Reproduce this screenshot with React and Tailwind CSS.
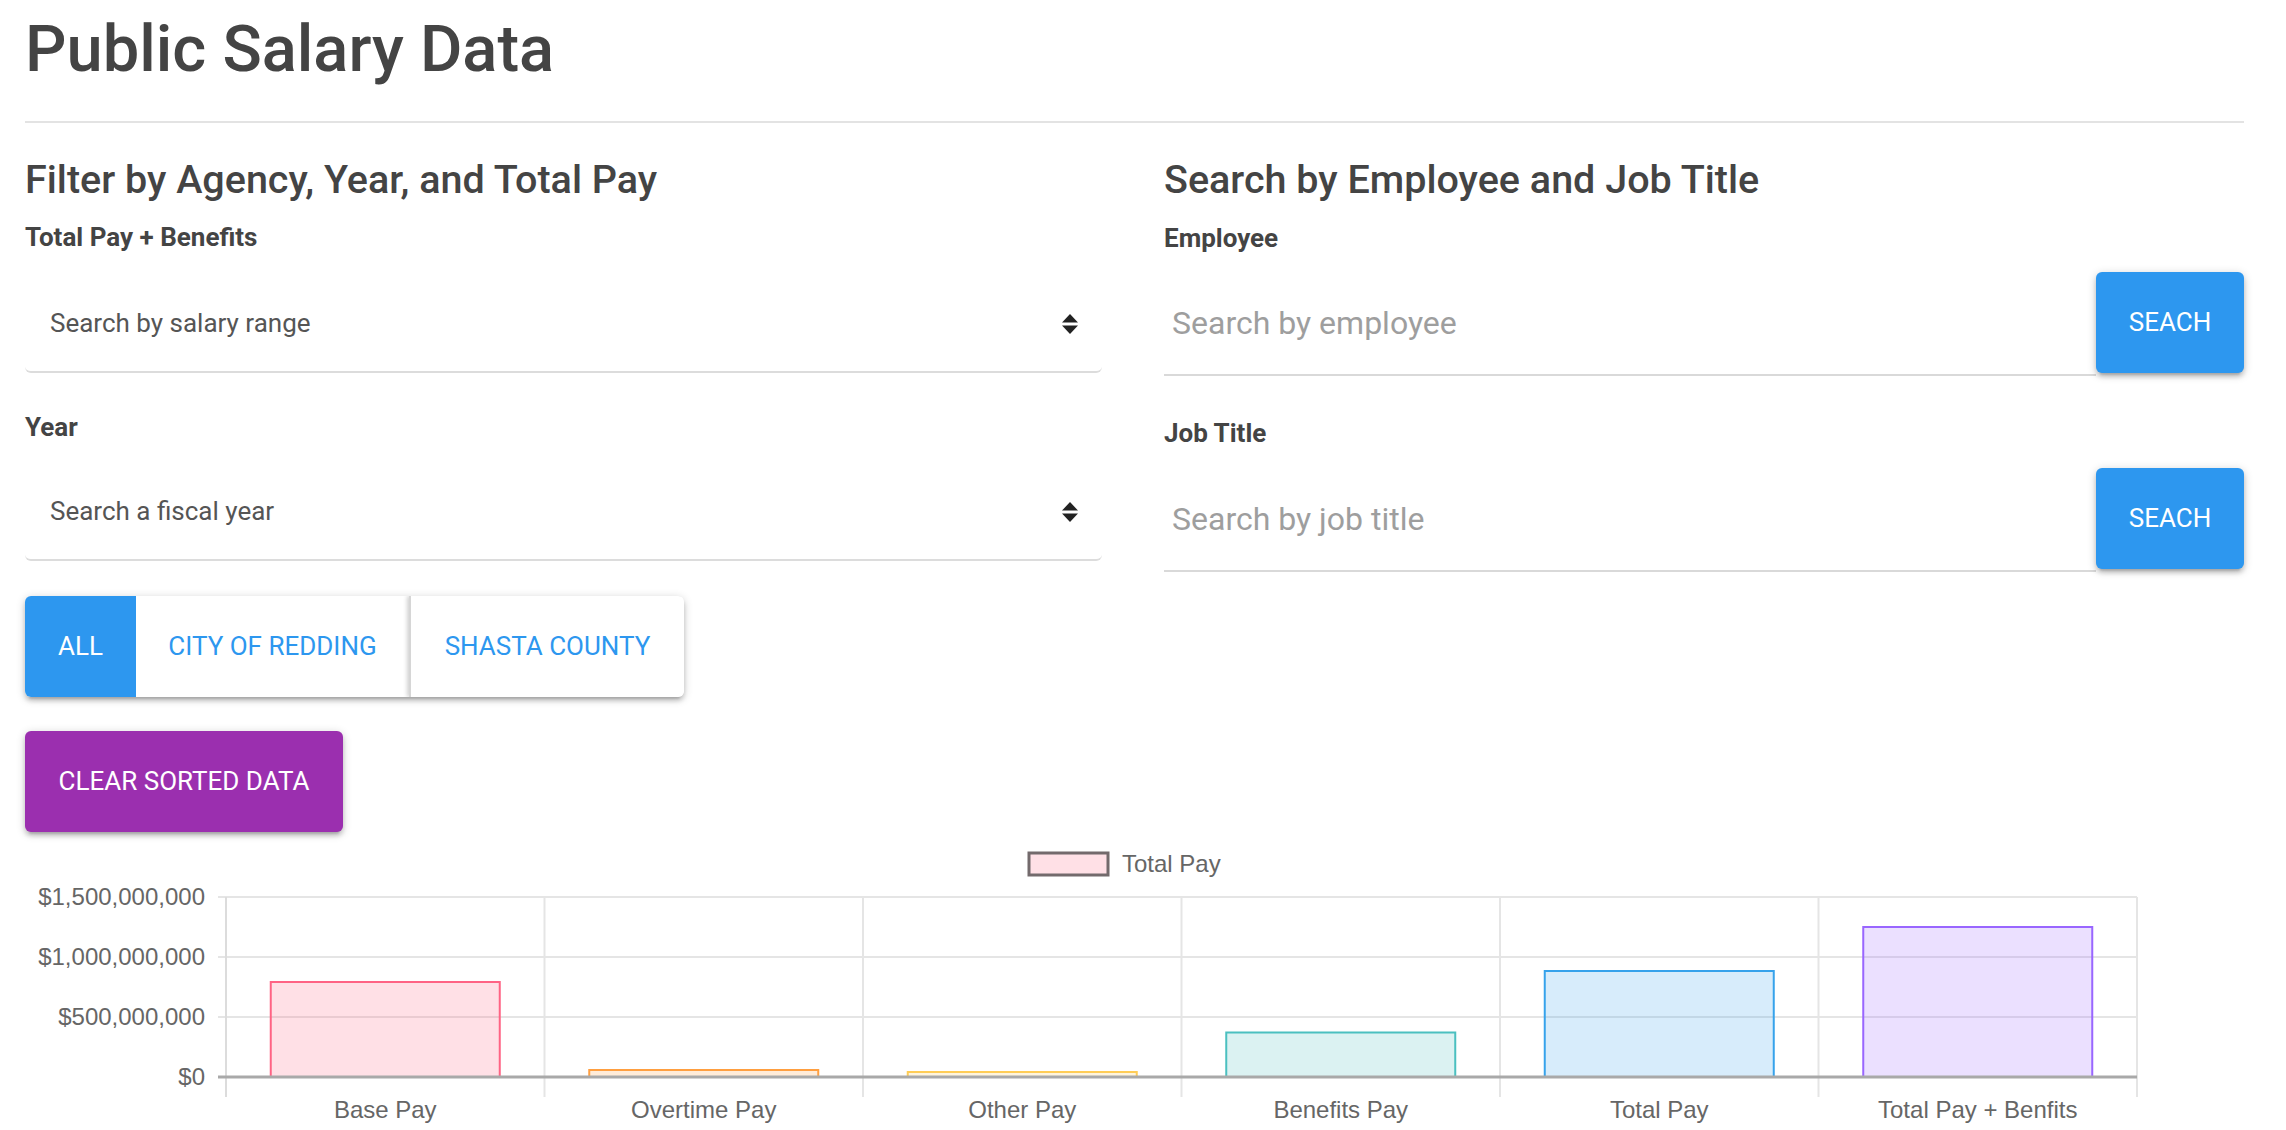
import React from "react";

function Arrows() {
  return (
    <svg width="16" height="20" viewBox="0 0 16 20">
      <path d="M8 0 L16 8.5 L0 8.5 Z" fill="#222" />
      <path d="M0 11.5 L16 11.5 L8 20 Z" fill="#222" />
    </svg>
  );
}

function SelectBox({ text, className }) {
  return (
    <div
      className={
        "h-[97px] rounded-[6px] border-b-2 border-[#dcdcdc] bg-white flex items-center justify-between pl-[25px] pr-[24px] " +
        className
      }
    >
      <span className="text-[26px] text-[#555]">{text}</span>
      <Arrows />
    </div>
  );
}

function SearchRow({ placeholder, className }) {
  return (
    <div className={"flex items-start " + className}>
      <div className="flex-1 h-[104px] border-b-2 border-[#d9d9d9] flex items-center pl-[8px]">
        <span className="text-[32px] text-[#9e9e9e]">{placeholder}</span>
      </div>
      <button className="w-[148px] h-[101px] rounded-[6px] bg-[#2d97ef] text-white text-[26px] shadow-[0_4px_4px_0_rgba(0,0,0,0.14),0_6px_2px_-4px_rgba(0,0,0,0.12),0_2px_10px_0_rgba(0,0,0,0.2)]">
        SEACH
      </button>
    </div>
  );
}

const bars = [
  { label: "Base Pay", h: 95, fill: "rgba(255,99,132,0.2)", stroke: "rgb(255,99,132)" },
  { label: "Overtime Pay", h: 7, fill: "rgba(255,159,64,0.2)", stroke: "rgb(255,159,64)" },
  { label: "Other Pay", h: 5, fill: "rgba(255,205,86,0.2)", stroke: "rgb(255,205,86)" },
  { label: "Benefits Pay", h: 44.5, fill: "rgba(75,192,192,0.2)", stroke: "rgb(75,192,192)" },
  { label: "Total Pay", h: 106, fill: "rgba(54,162,235,0.2)", stroke: "rgb(54,162,235)" },
  { label: "Total Pay + Benfits", h: 150, fill: "rgba(153,102,255,0.2)", stroke: "rgb(153,102,255)" },
];

function Chart() {
  const x0 = 201;
  const cw = 318.5;
  const zero = 237;
  const grid = [
    { y: 57, t: "$1,500,000,000" },
    { y: 117, t: "$1,000,000,000" },
    { y: 177, t: "$500,000,000" },
    { y: 237, t: "$0" },
  ];
  const bw = 229;
  return (
    <svg width="2219" height="290" viewBox="0 0 2219 290" className="block overflow-visible" style={{ fontFamily: "'Liberation Sans', Arial, sans-serif" }}>
      <rect x="1004" y="13" width="79" height="22" fill="rgba(255,99,132,0.2)" stroke="#736a6c" strokeWidth="3" />
      <text x="1097" y="32" fontSize="24" fill="#666">Total Pay</text>
      {grid.slice(0, 3).map((g) => (
        <line key={g.y} x1="193" x2={x0 + cw * 6} y1={g.y} y2={g.y} stroke="#e5e5e5" strokeWidth="2" />
      ))}
      {[0, 1, 2, 3, 4, 5, 6].map((i) => (
        <line key={i} x1={x0 + cw * i} x2={x0 + cw * i} y1="57" y2="257" stroke={i === 0 ? "#dcdcdc" : "#e5e5e5"} strokeWidth="2" />
      ))}
      {bars.map((b, i) => {
        const cx = x0 + cw * (i + 0.5);
        const left = cx - bw / 2;
        const top = zero - b.h;
        return (
          <g key={b.label}>
            <rect x={left} y={top} width={bw} height={b.h} fill={b.fill} />
            <path d={`M${left} ${zero} L${left} ${top} L${left + bw} ${top} L${left + bw} ${zero}`} fill="none" stroke={b.stroke} strokeWidth="2" />
            <text x={cx} y="278" fontSize="24" fill="#666" textAnchor="middle">{b.label}</text>
          </g>
        );
      })}
      <line x1="193" x2={x0 + cw * 6} y1={zero} y2={zero} stroke="#a9a9a9" strokeWidth="3" />
      {grid.map((g) => (
        <text key={g.t} x="180" y={g.y + 8} fontSize="24" fill="#666" textAnchor="end">{g.t}</text>
      ))}
    </svg>
  );
}

export default function App() {
  const shadow = "shadow-[0_4px_4px_0_rgba(0,0,0,0.14),0_6px_2px_-4px_rgba(0,0,0,0.12),0_2px_10px_0_rgba(0,0,0,0.2)]";
  return (
    <div className="min-h-screen bg-white pl-[25px] pr-[42px] text-[#444] font-['Roboto',sans-serif]">
      <h1 className="h-[121px] pt-[13px] text-[65px] leading-[72px] font-medium">Public Salary Data</h1>
      <div className="h-[2px] bg-[#e3e3e3]" />
      <div className="grid grid-cols-[1077px_1fr] gap-x-[62px]">
        <div className="flex flex-col">
          <h2 className="mt-[35px] text-[39.5px] leading-[44px] font-medium">Filter by Agency, Year, and Total Pay</h2>
          <div className="mt-[20px] text-[26px] leading-[30px] font-bold">Total Pay + Benefits</div>
          <SelectBox text="Search by salary range" className="mt-[24px]" />
          <div className="mt-[39px] text-[26px] leading-[30px] font-bold">Year</div>
          <SelectBox text="Search a fiscal year" className="mt-[22px]" />
          <div className={"mt-[35px] flex w-[659px] h-[101px] rounded-[6px] overflow-hidden bg-white " + shadow}>
            <button className="w-[111px] bg-[#2d97ef] text-white text-[26px]">ALL</button>
            <button className="w-[273px] bg-white text-[#2d97ef] text-[26px]">CITY OF REDDING</button>
            <button className="flex-1 bg-white text-[#2d97ef] text-[26px] border-l-2 border-[#d6d6d6] shadow-[-2px_0_4px_rgba(0,0,0,0.18)]">SHASTA COUNTY</button>
          </div>
          <button className={"mt-[34px] w-[318px] h-[101px] rounded-[6px] bg-[#9b2faf] text-white text-[26px] " + shadow}>
            CLEAR SORTED DATA
          </button>
        </div>
        <div className="flex flex-col">
          <h2 className="mt-[35px] text-[39.5px] leading-[44px] font-medium">Search by Employee and Job Title</h2>
          <div className="mt-[21px] text-[26px] leading-[30px] font-bold">Employee</div>
          <SearchRow placeholder="Search by employee" className="mt-[19px]" />
          <div className="mt-[42px] text-[26px] leading-[30px] font-bold">Job Title</div>
          <SearchRow placeholder="Search by job title" className="mt-[20px]" />
        </div>
      </div>
      <div className="mt-[8px]">
        <Chart />
      </div>
    </div>
  );
}
